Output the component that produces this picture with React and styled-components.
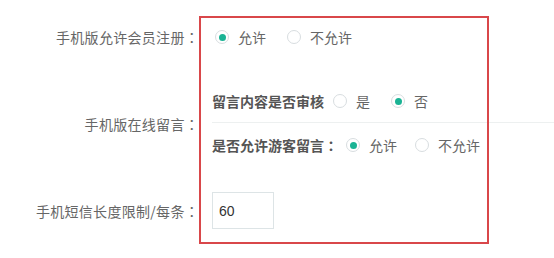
import React from "react";
import styled, { createGlobalStyle } from "styled-components";

const Global = createGlobalStyle`
  html, body { margin: 0; padding: 0; background: #fff; }
  body { font-family: "Noto Sans CJK SC", "Noto Sans", sans-serif; font-size: 14px; color: #666; }
`;

const Page = styled.div`
  position: relative;
  width: 554px;
  height: 258px;
  overflow: hidden;
  padding-top: 20px;
  box-sizing: border-box;
`;

const Row = styled.div`
  display: grid;
  grid-template-columns: 199px 1fr;
  column-gap: 13px;
  align-items: center;
  margin-top: ${(p) => p.$mt || 0}px;
  min-height: ${(p) => p.$h || 0}px;
`;

const Label = styled.div`
  text-align: right;
  white-space: nowrap;
  color: #666;
  font-size: 14px;
  line-height: 20px;
  letter-spacing: 0.3px;
`;

const Colon = styled.span`
  font-family: "Noto Sans CJK JP", sans-serif;
`;

const Options = styled.div`
  display: flex;
  align-items: center;
  height: ${(p) => p.$h || 34}px;
  border-bottom: ${(p) => (p.$line ? "1px solid #edf0f0" : "none")};
  box-sizing: border-box;
`;

const SubLabel = styled.span`
  font-weight: bold;
  color: #555;
  margin-right: ${(p) => p.$mr || 4}px;
  white-space: nowrap;
`;

const Choice = styled.label`
  display: inline-flex;
  align-items: center;
  margin-right: ${(p) => p.$mr || 18}px;
  color: #666;
  white-space: nowrap;
`;

const Dot = styled.span`
  width: 12px;
  height: 12px;
  border-radius: 50%;
  border: 1px solid #d8dde0;
  box-sizing: content-box;
  display: inline-flex;
  align-items: center;
  justify-content: center;
  margin-left: 3px;
  margin-right: 9px;
  background: #fff;
  &::after {
    content: "";
    width: 7px;
    height: 7px;
    border-radius: 50%;
    background: ${(p) => (p.$on ? "#1ab394" : "transparent")};
  }
`;

const Group = styled.div`
  display: flex;
  flex-direction: column;
`;

const Input = styled.input`
  width: 62px;
  height: 37px;
  box-sizing: border-box;
  border: 1px solid #dde4e6;
  padding: 0 6px;
  font-family: "Liberation Sans", Arial, sans-serif;
  font-size: 14px;
  color: #333;
  outline: none;
`;

const Highlight = styled.div`
  position: absolute;
  left: 199px;
  top: 16px;
  width: 290px;
  height: 228px;
  box-sizing: border-box;
  border: 2px solid #d9474a;
  pointer-events: none;
`;

function Radio({ on, children, mr }) {
  return (
    <Choice $mr={mr}>
      <Dot $on={on} />
      {children}
    </Choice>
  );
}

export default function App() {
  return (
    <Page>
      <Global />
      <Row $h={34}>
        <Label>手机版允许会员注册<Colon>：</Colon></Label>
        <Options $h={34}>
          <Radio on>允许</Radio>
          <Radio>不允许</Radio>
        </Options>
      </Row>
      <Row $mt={26}>
        <Label>手机版在线留言<Colon>：</Colon></Label>
        <Group>
          <Options $h={43} $line>
            <SubLabel $mr={6}>留言内容是否审核</SubLabel>
            <Radio mr={18}>是</Radio>
            <Radio on>否</Radio>
          </Options>
          <Options $h={44}>
            <SubLabel $mr={5}>是否允许游客留言<Colon>：</Colon></SubLabel>
            <Radio on mr={15}>允许</Radio>
            <Radio>不允许</Radio>
          </Options>
        </Group>
      </Row>
      <Row $mt={25}>
        <Label>手机短信长度限制/每条<Colon>：</Colon></Label>
        <div>
          <Input defaultValue="60" />
        </div>
      </Row>
      <Highlight />
    </Page>
  );
}
